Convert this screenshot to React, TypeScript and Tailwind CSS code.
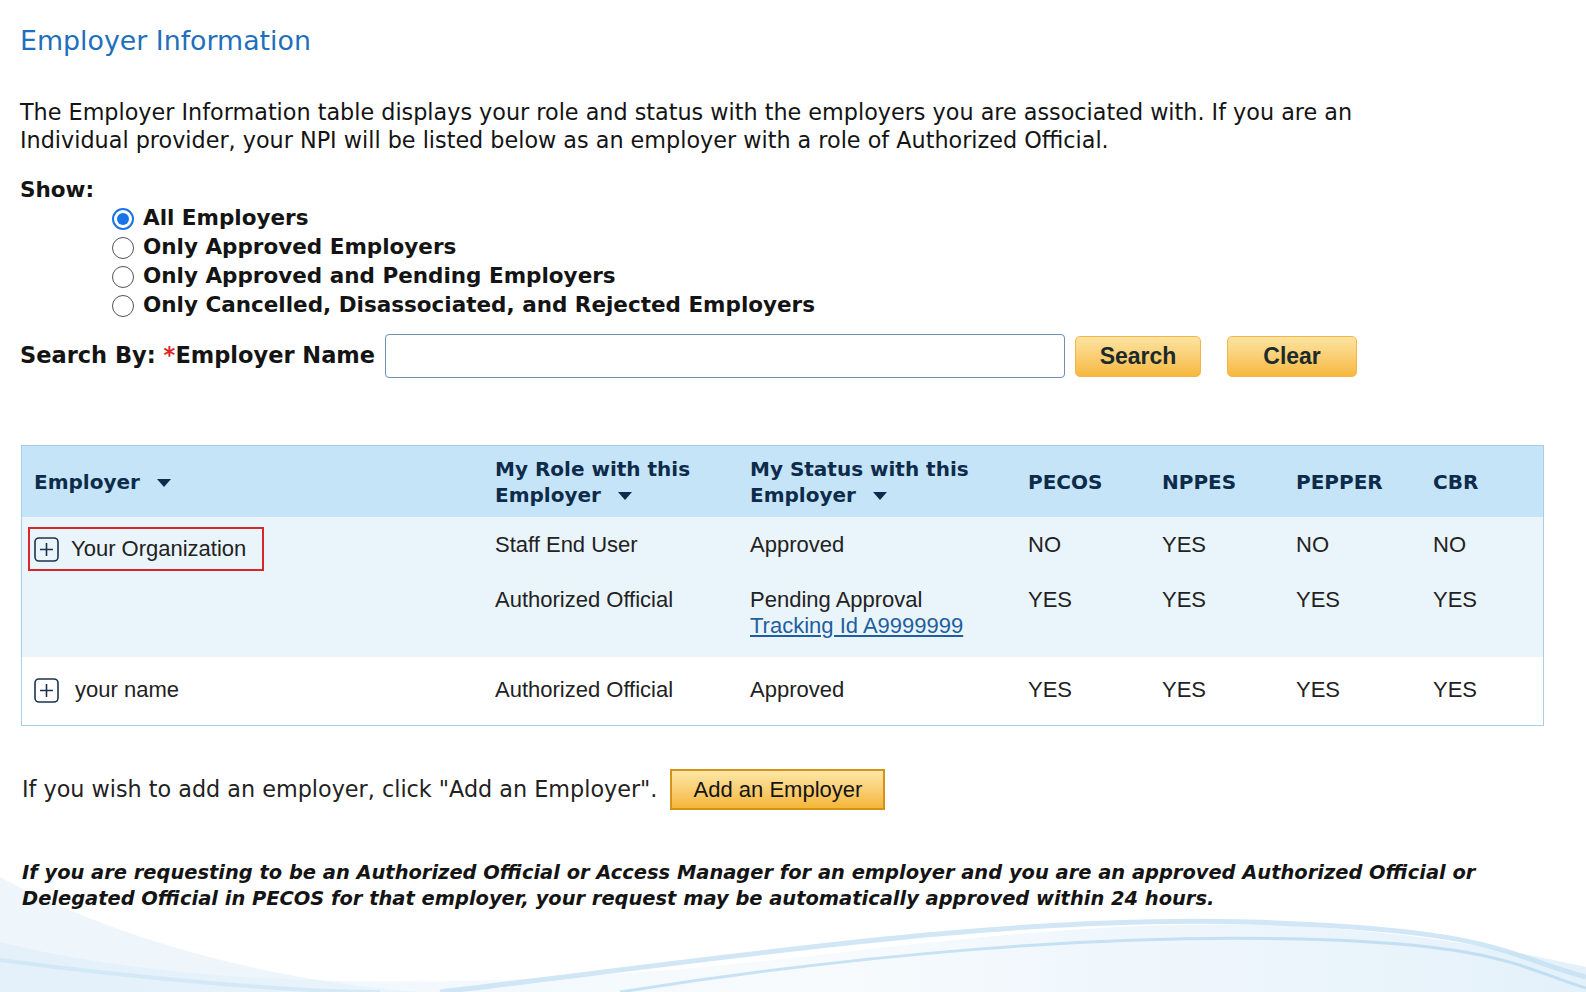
import React from 'react';

const verdana = { fontFamily: '"DejaVu Sans", Verdana, sans-serif' };
const arial = { fontFamily: '"Liberation Sans", Arial, sans-serif' };

type Row = {
  employer?: string;
  highlight?: boolean;
  role: string;
  status: string;
  tracking?: string;
  flags: string[];
};

const groups: { bg: string; pad: string; rows: Row[] }[] = [
  {
    bg: 'bg-[#eaf4fb]',
    pad: 'pt-[15px] pb-[18px]',
    rows: [
      { employer: 'Your Organization', highlight: true, role: 'Staff End User', status: 'Approved', flags: ['NO', 'YES', 'NO', 'NO'] },
      { role: 'Authorized Official', status: 'Pending Approval', tracking: 'Tracking Id A9999999', flags: ['YES', 'YES', 'YES', 'YES'] },
    ],
  },
  {
    bg: 'bg-white',
    pad: 'pt-[20px] pb-[22px]',
    rows: [{ employer: 'your name', role: 'Authorized Official', status: 'Approved', flags: ['YES', 'YES', 'YES', 'YES'] }],
  },
];

const cols = 'grid grid-cols-[461px_255px_278px_134px_134px_137px_1fr]';

function Caret() {
  return (
    <svg className="ml-4 inline-block h-[10px] w-[16px] align-middle" viewBox="0 0 16 10">
      <path d="M1 1h14L8 9z" fill="#0d2b4a" />
    </svg>
  );
}

function PlusBox() {
  return (
    <svg className="h-[25px] w-[25px] shrink-0" viewBox="0 0 25 25">
      <rect x="1" y="1" width="23" height="23" rx="4" fill="none" stroke="#1c3350" strokeWidth="1.6" />
      <path d="M12.5 6v13M6 12.5h13" stroke="#1c3350" strokeWidth="1.6" />
    </svg>
  );
}

function Radio({ checked }: { checked?: boolean }) {
  if (checked) {
    return (
      <span className="flex h-[22px] w-[22px] items-center justify-center rounded-full border-2 border-[#1a73e8] bg-white">
        <span className="h-[12px] w-[12px] rounded-full bg-[#1a73e8]" />
      </span>
    );
  }
  return <span className="h-[22px] w-[22px] rounded-full border border-[#555] bg-white" />;
}

function Waves() {
  return (
    <svg className="pointer-events-none absolute bottom-0 left-0 h-[150px] w-full" viewBox="0 0 1586 150" preserveAspectRatio="none">
      <defs>
        <linearGradient id="w1" x1="0" y1="0" x2="1" y2="0">
          <stop offset="0" stopColor="#d6eaf8" />
          <stop offset="0.5" stopColor="#eef6fc" />
          <stop offset="1" stopColor="#c4e0f4" />
        </linearGradient>
      </defs>
      <path d="M0 35 C 120 100, 280 140, 420 150 L0 150 Z" fill="#eaf4fb" opacity="0.8" />
      <path d="M0 100 C 200 150, 500 150, 800 115 S 1300 60, 1586 125 L1586 150 L0 150 Z" fill="url(#w1)" opacity="0.45" />
      <path d="M440 150 C 700 120, 1000 72, 1250 80 S 1500 112, 1586 135" fill="none" stroke="#c2dff3" strokeWidth="5" opacity="0.75" />
      <path d="M620 150 C 860 112, 1100 92, 1300 97 S 1520 126, 1586 146" fill="none" stroke="#a9d2ef" strokeWidth="3" opacity="0.6" />
      <path d="M0 118 C 150 138, 300 150, 380 150" fill="none" stroke="#c8e2f4" strokeWidth="4" opacity="0.6" />
    </svg>
  );
}

export default function App() {
  return (
    <div className="relative h-[992px] w-full overflow-hidden bg-white text-[#141414]">
      <Waves />
      <div className="relative pl-5 pt-[25px]">
        <h1 className="text-[26.8px] leading-[32px] text-[#1f6fbd]" style={verdana}>
          Employer Information
        </h1>

        <p className="mt-[41px] whitespace-nowrap text-[22.3px] leading-[28px]" style={verdana}>
          The Employer Information table displays your role and status with the employers you are associated with. If you are an
          <br />
          Individual provider, your NPI will be listed below as an employer with a role of Authorized Official.
        </p>

        <div className="mt-[22px] text-[21.5px] font-bold leading-[28px]" style={verdana}>
          Show:
        </div>
        <div className="flex flex-col pl-[92px]" style={verdana}>
          {[
            ['All Employers', true],
            ['Only Approved Employers', false],
            ['Only Approved and Pending Employers', false],
            ['Only Cancelled, Disassociated, and Rejected Employers', false],
          ].map(([label, checked]) => (
            <label key={label as string} className="flex h-[29px] items-center gap-[9px] whitespace-nowrap text-[21.5px] font-bold">
              <Radio checked={checked as boolean} />
              <span>{label as string}</span>
            </label>
          ))}
        </div>

        <div className="mt-[14px] flex items-center" style={verdana}>
          <span className="whitespace-nowrap text-[22.5px] font-bold">
            Search By: <span className="text-[#d9262b]">*</span>Employer Name
          </span>
          <input className="ml-[10px] h-[44px] w-[680px] rounded-[4px] border border-[#6f8eb0] bg-white px-2 outline-none" />
          <button
            className="ml-[10px] h-[41px] w-[126px] rounded-[5px] border border-[#f2b54a] bg-gradient-to-b from-[#fde4a0] to-[#f6b83b] text-[23px] font-bold text-[#1c2a2a]"
            style={arial}
          >
            Search
          </button>
          <button
            className="ml-[26px] h-[41px] w-[130px] rounded-[5px] border border-[#f2b54a] bg-gradient-to-b from-[#fde4a0] to-[#f6b83b] text-[23px] font-bold text-[#1c2a2a]"
            style={arial}
          >
            Clear
          </button>
        </div>

        <div className="ml-px mt-[67px] w-[1523px] border border-[#a9cde6]">
          <div className={`${cols} h-[71px] items-center bg-[#c6e4f7] text-[20px] font-bold leading-[26px] text-[#0d2b4a]`} style={verdana}>
            <div className="px-3">
              Employer
              <Caret />
            </div>
            <div className="px-3">
              My Role with this
              <br />
              Employer
              <Caret />
            </div>
            <div className="px-3">
              My Status with this
              <br />
              Employer
              <Caret />
            </div>
            <div className="px-3">PECOS</div>
            <div className="px-3">NPPES</div>
            <div className="px-3">PEPPER</div>
            <div className="px-3">CBR</div>
          </div>

          {groups.map((g, gi) => (
            <div key={gi} className={`${g.bg} ${g.pad}`}>
              {g.rows.map((r, ri) => (
                <div
                  key={ri}
                  className={`${cols} items-start text-[22px] leading-[26px] text-[#222] ${ri > 0 ? 'mt-[29px]' : ''}`}
                  style={arial}
                >
                  <div className="h-[26px] pl-[6px]">
                    {r.employer && (
                      <div
                        className={`inline-flex items-center gap-[12px] ${
                          r.highlight ? '-mt-[5px] h-[44px] border-2 border-[#d9262b] pl-[4px] pr-[16px]' : 'pl-[6px]'
                        }`}
                      >
                        <PlusBox />
                        <span className={r.highlight ? '' : 'pl-[4px]'}>{r.employer}</span>
                      </div>
                    )}
                  </div>
                  <div className="px-3">{r.role}</div>
                  <div className="px-3">
                    {r.status}
                    {r.tracking && (
                      <div>
                        <a href="#" className="text-[#1f5f9e] underline">
                          {r.tracking}
                        </a>
                      </div>
                    )}
                  </div>
                  {r.flags.map((f, fi) => (
                    <div key={fi} className="px-3">
                      {f}
                    </div>
                  ))}
                </div>
              ))}
            </div>
          ))}
        </div>

        <div className="ml-[2px] mt-[43px] flex items-center">
          <span className="whitespace-nowrap text-[22.3px] text-[#222]" style={verdana}>
            If you wish to add an employer, click "Add an Employer".
          </span>
          <button
            className="ml-[13px] h-[41px] w-[215px] border-2 border-[#d4921a] bg-gradient-to-b from-[#fde7a4] to-[#f5b634] text-[22px] text-[#141414]"
            style={arial}
          >
            Add an Employer
          </button>
        </div>

        <p className="ml-[2px] mt-[50px] whitespace-nowrap text-[19.45px] font-bold italic leading-[26px]" style={verdana}>
          If you are requesting to be an Authorized Official or Access Manager for an employer and you are an approved Authorized Official or
          <br />
          Delegated Official in PECOS for that employer, your request may be automatically approved within 24 hours.
        </p>
      </div>
    </div>
  );
}
